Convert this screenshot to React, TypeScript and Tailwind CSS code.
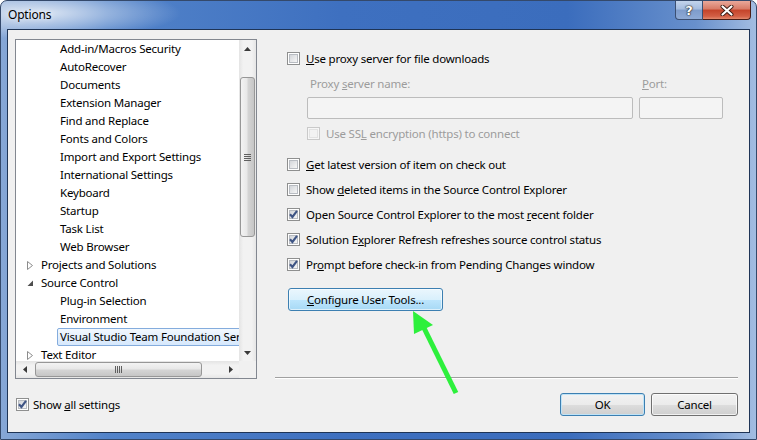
import React from "react";

function CheckBox({ checked = false, disabled = false }: { checked?: boolean; disabled?: boolean }) {
  return (
    <span
      className={
        disabled
          ? "relative flex h-[13px] w-[13px] shrink-0 items-center justify-center border border-[#c9c9c9] bg-[#f6f6f6]"
          : "relative flex h-[13px] w-[13px] shrink-0 items-center justify-center border border-[#8e8f8f] bg-white"
      }
    >
      <span
        className={
          disabled
            ? "h-[9px] w-[9px] border border-[#e2e2e2] bg-[#f2f2f2]"
            : "h-[9px] w-[9px] border border-[#b8bcc2] bg-[linear-gradient(135deg,#d3d6da,#f6f6f6)]"
        }
      />
      {checked && (
        <svg className="absolute left-[-1px] top-[-1px]" width="13" height="13" viewBox="0 0 13 13">
          <path d="M3 6.3 L5.4 9 L10 2.8" fill="none" stroke="#3f5585" strokeWidth="2.1" />
        </svg>
      )}
    </span>
  );
}

function Grip({ vertical }: { vertical: boolean }) {
  if (vertical) {
    return (
      <div className="flex flex-col gap-[1px]">
        <div className="h-[1px] w-[7px] bg-[#5f5f5f]" />
        <div className="h-[1px] w-[7px] bg-[#5f5f5f]" />
        <div className="h-[1px] w-[7px] bg-[#5f5f5f]" />
        <div className="h-[1px] w-[7px] bg-[#5f5f5f]" />
      </div>
    );
  }
  return (
    <div className="flex flex-row gap-[1px]">
      <div className="h-[7px] w-[1px] bg-[#5f5f5f]" />
      <div className="h-[7px] w-[1px] bg-[#5f5f5f]" />
      <div className="h-[7px] w-[1px] bg-[#5f5f5f]" />
      <div className="h-[7px] w-[1px] bg-[#5f5f5f]" />
    </div>
  );
}

type Row = { label: string; level: 0 | 1; state?: "collapsed" | "expanded"; selected?: boolean };

const rows: Row[] = [
  { label: "Add-in/Macros Security", level: 1 },
  { label: "AutoRecover", level: 1 },
  { label: "Documents", level: 1 },
  { label: "Extension Manager", level: 1 },
  { label: "Find and Replace", level: 1 },
  { label: "Fonts and Colors", level: 1 },
  { label: "Import and Export Settings", level: 1 },
  { label: "International Settings", level: 1 },
  { label: "Keyboard", level: 1 },
  { label: "Startup", level: 1 },
  { label: "Task List", level: 1 },
  { label: "Web Browser", level: 1 },
  { label: "Projects and Solutions", level: 0, state: "collapsed" },
  { label: "Source Control", level: 0, state: "expanded" },
  { label: "Plug-in Selection", level: 1 },
  { label: "Environment", level: 1 },
  { label: "Visual Studio Team Foundation Server", level: 1, selected: true },
  { label: "Text Editor", level: 0, state: "collapsed" },
];

function TreeRow({ row }: { row: Row }) {
  if (row.level === 0) {
    return (
      <div className="flex h-[18px] shrink-0 items-center whitespace-nowrap">
        <div className="flex w-[25px] shrink-0 items-center pl-[11px]">
          {row.state === "collapsed" ? (
            <svg width="7" height="9" viewBox="0 0 7 9">
              <polygon points="0.5,0.5 5.5,4.5 0.5,8.5" fill="#ffffff" stroke="#8c8c8c" strokeWidth="1" />
            </svg>
          ) : (
            <svg width="7" height="9" viewBox="0 0 7 9">
              <polygon points="0.5,7 6,1.5 6,7" fill="#4e4e4e" />
            </svg>
          )}
        </div>
        <span>{row.label}</span>
      </div>
    );
  }
  return (
    <div className="flex h-[18px] shrink-0 items-center whitespace-nowrap pl-[41px]">
      <div
        className={
          row.selected
            ? "flex h-[18px] items-center rounded-[2px] border border-[#84acdd] bg-[linear-gradient(#f2f8fe,#d6e8fc)] pl-[2px] pr-[3px]"
            : "flex h-[18px] items-center border border-transparent pl-[2px] pr-[3px]"
        }
      >
        {row.label}
      </div>
    </div>
  );
}

function Tree() {
  return (
    <div className="flex h-[340px] w-[242px] flex-col border border-[#828790] bg-white">
      <div className="flex min-h-0 flex-1">
        <div className="flex min-w-0 flex-1 flex-col overflow-hidden">
          {rows.map((r) => (
            <TreeRow key={r.label} row={r} />
          ))}
        </div>
        {/* vertical scrollbar */}
        <div className="flex w-[17px] shrink-0 flex-col bg-[linear-gradient(90deg,#e4e4e4,#f2f2f2_25%,#f2f2f2_75%,#e6e6e6)]">
          <div className="flex h-[17px] shrink-0 items-center justify-center">
            <svg width="7" height="4" viewBox="0 0 7 4">
              <polygon points="0,4 3.5,0 7,4" fill="#3a3a3a" />
            </svg>
          </div>
          <div className="h-[20px] shrink-0" />
          <div className="mx-[1px] flex h-[160px] shrink-0 items-center justify-center rounded-[3px] border border-[#979797] bg-[linear-gradient(90deg,#f3f3f3_0%,#e8e8e8_45%,#d4d4d4_55%,#c6c6c6_100%)]">
            <Grip vertical />
          </div>
          <div className="flex-1" />
          <div className="flex h-[17px] shrink-0 items-center justify-center">
            <svg width="7" height="4" viewBox="0 0 7 4">
              <polygon points="0,0 3.5,4 7,0" fill="#3a3a3a" />
            </svg>
          </div>
        </div>
      </div>
      {/* horizontal scrollbar */}
      <div className="flex h-[17px] shrink-0">
        <div className="flex flex-1 items-stretch bg-[linear-gradient(180deg,#e4e4e4,#f2f2f2_25%,#f2f2f2_75%,#e6e6e6)]">
          <div className="flex w-[17px] shrink-0 items-center justify-center">
            <svg width="4" height="7" viewBox="0 0 4 7">
              <polygon points="4,0 0,3.5 4,7" fill="#3a3a3a" />
            </svg>
          </div>
          <div className="w-[2px] shrink-0" />
          <div className="my-[1px] flex w-[167px] shrink-0 items-center justify-center rounded-[3px] border border-[#979797] bg-[linear-gradient(180deg,#f3f3f3_0%,#e8e8e8_45%,#d4d4d4_55%,#c6c6c6_100%)]">
            <Grip vertical={false} />
          </div>
          <div className="flex-1" />
          <div className="flex w-[17px] shrink-0 items-center justify-center">
            <svg width="4" height="7" viewBox="0 0 4 7">
              <polygon points="0,0 4,3.5 0,7" fill="#3a3a3a" />
            </svg>
          </div>
        </div>
        <div className="w-[17px] shrink-0 bg-[#f0f0f0]" />
      </div>
    </div>
  );
}

function OptionRow({ checked, children }: { checked?: boolean; children: React.ReactNode }) {
  return (
    <div className="flex h-[18px] items-center gap-[6px]">
      <CheckBox checked={checked} />
      <span className="whitespace-nowrap pt-[1px]">{children}</span>
    </div>
  );
}

export default function App() {
  return (
    <div className="h-[440px] w-[757px] bg-white font-['Noto_Sans',sans-serif] text-[11.5px] leading-[16px] tracking-[-0.2px] text-black">
      <div className="relative flex h-[440px] w-[757px] flex-col rounded-t-[7px] border border-[#34496b] bg-[radial-gradient(ellipse_140px_26px_at_40px_12px,rgba(255,255,255,0.75),rgba(255,255,255,0)),linear-gradient(90deg,#86a7d6_0%,#5283c9_14%,#3e70c0_45%,#3b6dbd_75%,#6890cc_92%,#a3bde2_100%)]">
        {/* title bar */}
        <div className="flex h-[28px] shrink-0 items-start justify-between">
          <span className="mt-[6px] pl-[7px] text-[12px] text-black [text-shadow:0_0_6px_rgba(255,255,255,0.9)]">
            Options
          </span>
          <div className="flex pr-[5px]">
            <div className="flex h-[19px] w-[28px] items-center justify-center rounded-bl-[4px] border border-t-0 border-[#3b4f72] bg-[linear-gradient(#c3d4ec_0%,#a4bcdf_45%,#7e9ccb_50%,#8eaad6_100%)]">
              <span className="font-['DejaVu_Sans',sans-serif] text-[13px] font-bold leading-none tracking-normal text-white [text-shadow:0_0_1px_#222,0_0_1px_#222,0_0_2px_#333]">
                ?
              </span>
            </div>
            <div className="flex h-[19px] w-[48px] items-center justify-center rounded-br-[4px] border border-l-0 border-t-0 border-[#4a1d16] bg-[linear-gradient(#e9a89a_0%,#d77a66_45%,#c4432a_50%,#d35f45_85%,#e28a6e_100%)]">
              <svg width="14" height="11" viewBox="0 0 14 11">
                <path d="M2.5 1.5 L11.5 9.5 M11.5 1.5 L2.5 9.5" stroke="#3a1a12" strokeWidth="4" strokeLinecap="round" />
                <path d="M2.5 1.5 L11.5 9.5 M11.5 1.5 L2.5 9.5" stroke="#ffffff" strokeWidth="2.2" strokeLinecap="round" />
              </svg>
            </div>
          </div>
        </div>

        {/* client area */}
        <div className="mx-[6px] flex h-[404px] shrink-0 flex-col border border-[#1e3456] bg-[#f0f0f0]">
          <div className="flex h-[349px] shrink-0">
            <div className="pl-[7px] pt-[9px]">
              <Tree />
            </div>
            <div className="flex flex-1 flex-col pl-[18px] pr-[11px]">
              <div className="flex flex-col pl-[12px]">
                <div className="mt-[19px]">
                  <OptionRow>
                    <u>U</u>se proxy server for file downloads
                  </OptionRow>
                </div>
                <div className="mt-[8px] grid grid-cols-[326px_84px] gap-x-[6px] pl-[20px] text-[#9c9c9c]">
                  <span className="h-[16px] pl-[3px] pt-[1px]">
                    Proxy <u>s</u>erver name:
                  </span>
                  <span className="h-[16px] pl-[3px] pt-[1px]">
                    <u>P</u>ort:
                  </span>
                  <div className="mt-[6px] h-[22px] rounded-[2px] border border-[#bcbcbc] bg-[#f4f4f4]" />
                  <div className="mt-[6px] h-[22px] rounded-[2px] border border-[#bcbcbc] bg-[#f4f4f4]" />
                </div>
                <div className="mt-[5px] flex h-[18px] items-center gap-[6px] pl-[20px] text-[#9c9c9c]">
                  <CheckBox disabled />
                  <span className="whitespace-nowrap pt-[1px]">
                    Use SS<u>L</u> encryption (https) to connect
                  </span>
                </div>
                <div className="mt-[13px] flex flex-col gap-[7px]">
                  <OptionRow>
                    <u>G</u>et latest version of item on check out
                  </OptionRow>
                  <OptionRow>
                    Show <u>d</u>eleted items in the Source Control Explorer
                  </OptionRow>
                  <OptionRow checked>
                    Open Source Control Explorer to the most <u>r</u>ecent folder
                  </OptionRow>
                  <OptionRow checked>
                    Solution E<u>x</u>plorer Refresh refreshes source control status
                  </OptionRow>
                  <OptionRow checked>
                    Pr<u>o</u>mpt before check-in from Pending Changes window
                  </OptionRow>
                </div>
                <div className="mt-[15px] pl-[1px]">
                  <div className="flex h-[23px] w-[155px] items-center justify-center rounded-[3px] border border-[#3c7fb1] bg-[linear-gradient(#eaf6fd_0%,#d9f0fc_50%,#bee6fd_50%,#a7d9f5_100%)] shadow-[inset_0_0_0_1px_rgba(255,255,255,0.6)]">
                    <span>
                      <u>C</u>onfigure User Tools...
                    </span>
                  </div>
                </div>
              </div>
              <div className="mb-[1px] mt-auto h-[1px] bg-[#a0a0a0] shadow-[0_1px_0_#ffffff]" />
            </div>
          </div>

          {/* bottom row */}
          <div className="mt-[14px] flex h-[23px] items-center justify-between pl-[8px] pr-[11px]">
            <div className="flex items-center gap-[4px]">
              <CheckBox checked />
              <span>
                Show <u>a</u>ll settings
              </span>
            </div>
            <div className="flex gap-[6px]">
              <div className="flex h-[23px] w-[85px] items-center justify-center rounded-[3px] border border-[#3c7fb1] bg-[linear-gradient(#f2f2f2_0%,#ebebeb_50%,#dddddd_50%,#cfcfcf_100%)] shadow-[inset_0_0_0_1px_#bfe3f7]">
                OK
              </div>
              <div className="flex h-[23px] w-[87px] items-center justify-center rounded-[3px] border border-[#707070] bg-[linear-gradient(#f2f2f2_0%,#ebebeb_50%,#dddddd_50%,#cfcfcf_100%)] shadow-[inset_0_0_0_1px_rgba(255,255,255,0.7)]">
                Cancel
              </div>
            </div>
          </div>
        </div>

        {/* annotation arrow */}
        <svg className="pointer-events-none absolute left-[-1px] top-[-1px]" width="757" height="440" viewBox="0 0 757 440">
          <line x1="424" y1="328" x2="456" y2="393" stroke="#2df03c" strokeWidth="5" />
          <polygon points="413,311 414,334 433,325" fill="#2df03c" />
        </svg>
      </div>
    </div>
  );
}
